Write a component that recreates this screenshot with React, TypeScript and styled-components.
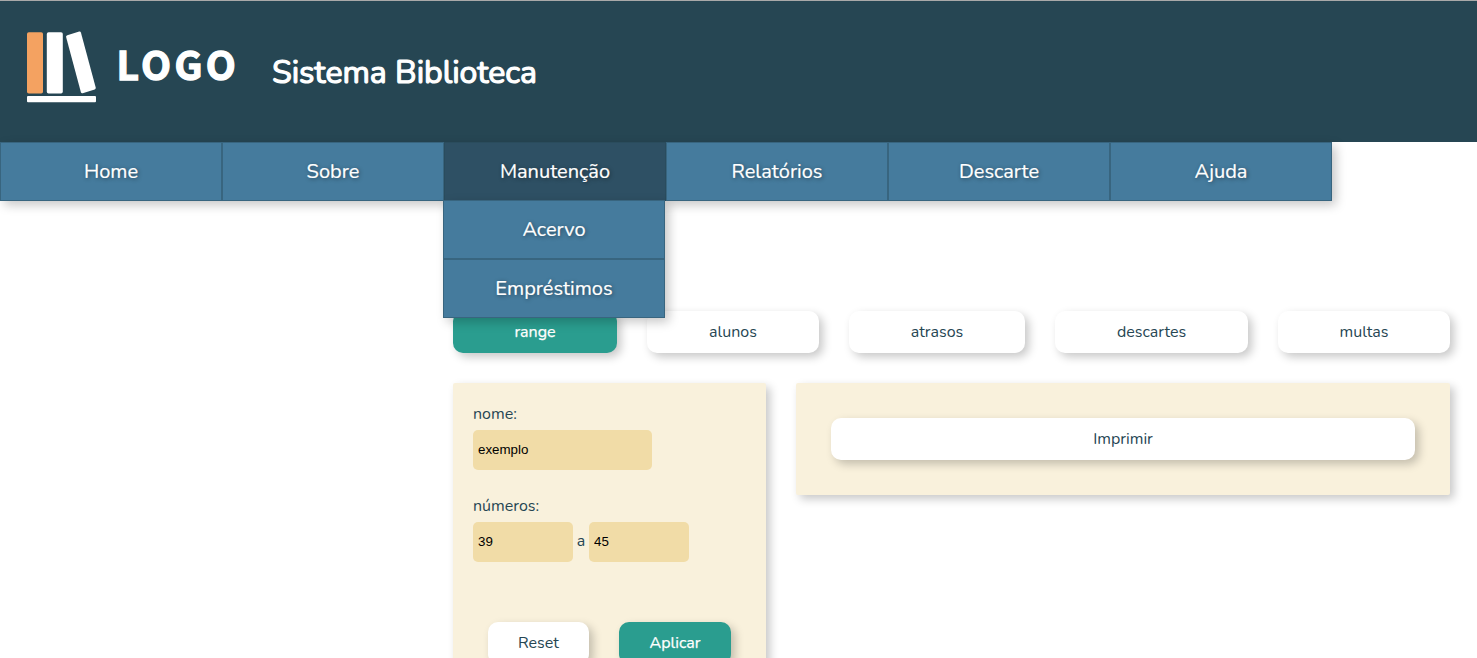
import React from "react";
import styled, { createGlobalStyle, css } from "styled-components";

const GlobalStyle = createGlobalStyle`
  *, *::before, *::after { box-sizing: border-box; }
  html, body { margin: 0; padding: 0; background: #fff; }
  body {
    font-family: Nunito, Lato, "Open Sans", sans-serif;
    font-size: 16px;
    color: #264653;
  }
`;

const shadow = "4px 4px 10px rgba(0, 0, 0, 0.22)";

const Page = styled.div`
  height: 658px;
  overflow: hidden;
`;

const Header = styled.header`
  display: flex;
  align-items: flex-start;
  height: 142px;
  border-top: 1px solid #a9a9a9;
  background: #264653;
  color: #fff;
`;

const Mark = styled.svg`
  flex: none;
  width: 72px;
  height: 74px;
  margin: 29px 0 0 26px;
`;

const LogoText = styled.span`
  width: 154px;
  margin-top: 34px;
  padding-left: 18.5px;
  font-family: "Noto Sans CJK SC", "Noto Sans", sans-serif;
  font-size: 39px;
  line-height: 56px;
  font-weight: 700;
  letter-spacing: 3.4px;
  -webkit-text-stroke: 1.3px #fff;
`;

const Title = styled.h1`
  margin: 50px 0 0 20px;
  font-size: 32px;
  line-height: 44px;
  font-weight: 400;
  -webkit-text-stroke: 1.2px #fff;
  white-space: nowrap;
`;

const Nav = styled.nav`
  position: relative;
  z-index: 1;
  display: flex;
  width: 1332px;
  height: 59px;
  box-shadow: ${shadow};
`;

const entry = css`
  display: flex;
  align-items: center;
  justify-content: center;
  width: 222px;
  height: 59px;
  border: 1px solid rgba(38, 70, 83, 0.4);
  color: #fff;
  font-size: 20px;
  text-decoration: none;
  text-shadow: 1px 1px 4px rgba(0, 0, 0, 0.45);
  -webkit-text-stroke: 0.2px #fff;
`;

const NavItem = styled.div`
  position: relative;
`;

const NavLink = styled.a<{ $active?: boolean }>`
  ${entry}
  background: ${(p) => (p.$active ? "#2e5064" : "#457b9d")};
`;

const SubMenu = styled.div`
  position: absolute;
  top: 58px;
  left: -1px;
  box-shadow: ${shadow};
`;

const Main = styled.main`
  width: 997px;
  margin: 110px 0 0 453px;
`;

const Tabs = styled.div`
  display: flex;
  gap: 30px;
`;

const Button = styled.button<{ $width?: number; $primary?: boolean }>`
  flex: none;
  width: ${(p) => (p.$width ? `${p.$width}px` : "100%")};
  height: 42px;
  padding: 0;
  border: 0;
  border-radius: 10px;
  background: ${(p) => (p.$primary ? "#2a9d8f" : "#fff")};
  color: ${(p) => (p.$primary ? "#fff" : "#264653")};
  box-shadow: ${shadow};
  font-family: inherit;
  font-size: 16px;
  -webkit-text-stroke: ${(p) => (p.$primary ? "0.25px #fff" : "0")};
`;

const Panels = styled.div`
  display: flex;
  align-items: flex-start;
  justify-content: space-between;
  margin-top: 30px;
`;

const Panel = styled.section`
  border-radius: 2px;
  background: #f9f1dc;
  box-shadow: ${shadow};
`;

const FilterPanel = styled(Panel)`
  width: 313px;
  height: 316px;
  padding: 20px;
`;

const PrintPanel = styled(Panel)`
  width: 654px;
  padding: 35px;
`;

const Field = styled.div`
  height: 92px;
`;

const Label = styled.label`
  display: block;
  height: 27px;
  line-height: 22px;
`;

const InputRow = styled.div`
  display: flex;
  align-items: center;
`;

const Input = styled.input<{ $width: number }>`
  width: ${(p) => p.$width}px;
  height: 40px;
  padding: 0 5px 1px;
  border: 0;
  border-radius: 5px;
  background: #f1dca7;
  color: #000;
  font-family: "Liberation Sans", Arial, sans-serif;
  font-size: 13.33px;
`;

const Between = styled.span`
  width: 16px;
  padding-bottom: 2px;
  text-align: center;
`;

const Actions = styled.div`
  display: flex;
  gap: 30px;
  padding: 35px 15px 0;
`;

const BookMark = () => (
  <Mark viewBox="0 0 72 74" aria-hidden="true">
    <rect x="1" y="2.3" width="16" height="61.3" rx="1.8" fill="#f4a261" />
    <rect x="20.8" y="2.3" width="16" height="61.3" rx="1.8" fill="#fff" />
    <path d="M41.3 5.2 53.2 1.6Q54.5 1.3 54.9 2.5L69.7 57.5Q70 59 68.7 59.5L56.7 63.3Q55.3 63.6 54.9 62.3L40.1 7Q39.8 5.7 41.3 5.2Z" fill="#fff" />
    <rect x="1" y="66" width="69" height="6.2" rx="1" fill="#fff" />
  </Mark>
);

const links = ["Home", "Sobre", "Manutenção", "Relatórios", "Descarte", "Ajuda"];
const subLinks = ["Acervo", "Empréstimos"];
const tabs = [
  { text: "range", width: 164 },
  { text: "alunos", width: 172 },
  { text: "atrasos", width: 176 },
  { text: "descartes", width: 193 },
  { text: "multas", width: 172 },
];

export default function App() {
  return (
    <Page>
      <GlobalStyle />
      <Header>
        <BookMark />
        <LogoText>LOGO</LogoText>
        <Title>Sistema Biblioteca</Title>
      </Header>
      <Nav>
        {links.map((text) => (
          <NavItem key={text}>
            <NavLink $active={text === "Manutenção"}>{text}</NavLink>
            {text === "Manutenção" && (
              <SubMenu>
                {subLinks.map((sub) => (
                  <NavLink key={sub}>{sub}</NavLink>
                ))}
              </SubMenu>
            )}
          </NavItem>
        ))}
      </Nav>
      <Main>
        <Tabs>
          {tabs.map((tab) => (
            <Button key={tab.text} $width={tab.width} $primary={tab.text === "range"}>
              {tab.text}
            </Button>
          ))}
        </Tabs>
        <Panels>
          <FilterPanel>
            <Field>
              <Label>nome:</Label>
              <Input $width={179} defaultValue="exemplo" />
            </Field>
            <Field>
              <Label>números:</Label>
              <InputRow>
                <Input $width={100} defaultValue="39" />
                <Between>a</Between>
                <Input $width={100} defaultValue="45" />
              </InputRow>
            </Field>
            <Actions>
              <Button $width={101}>Reset</Button>
              <Button $width={112} $primary>Aplicar</Button>
            </Actions>
          </FilterPanel>
          <PrintPanel>
            <Button>Imprimir</Button>
          </PrintPanel>
        </Panels>
      </Main>
    </Page>
  );
}
